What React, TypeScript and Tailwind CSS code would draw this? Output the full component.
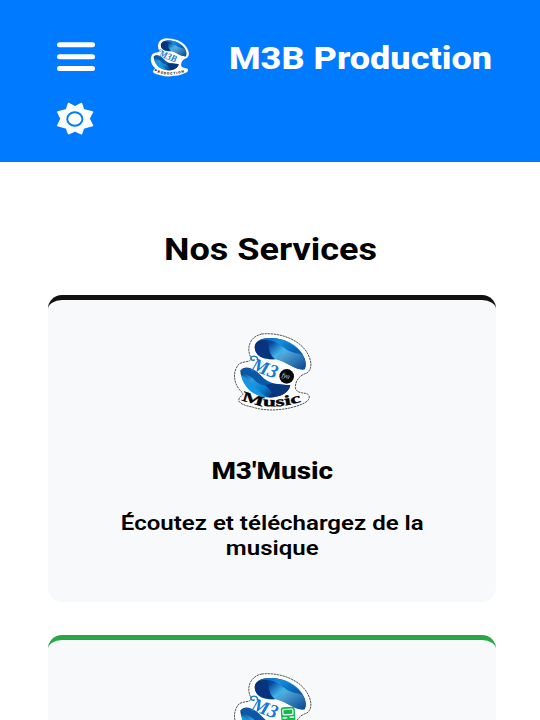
import React from "react";

type Variant = "production" | "music" | "message";

function Logo({ variant, className }: { variant: Variant; className: string }) {
  const id = "logo-" + variant;
  return (
    <svg viewBox="24 24 240 240" className={className}>
      <defs>
        <linearGradient id={id + "-a"} x1="0" y1="0" x2="1" y2="0.7">
          <stop offset="0" stopColor="#07164f" />
          <stop offset="0.3" stopColor="#08499f" />
          <stop offset="0.55" stopColor="#42b5e9" />
          <stop offset="1" stopColor="#062f83" />
        </linearGradient>
        <linearGradient id={id + "-b"} x1="0" y1="0" x2="1" y2="0.7">
          <stop offset="0" stopColor="#082765" />
          <stop offset="0.35" stopColor="#2d9ddd" />
          <stop offset="0.65" stopColor="#087dce" />
          <stop offset="1" stopColor="#061750" />
        </linearGradient>
        <linearGradient id={id + "-c"} x1="0" y1="0" x2="1" y2="0.4">
          <stop offset="0" stopColor="#0756ae" />
          <stop offset="0.5" stopColor="#138de0" />
          <stop offset="1" stopColor="#0860b4" />
        </linearGradient>
        <linearGradient id={id + "-d"} x1="0" y1="0" x2="1" y2="1">
          <stop offset="0" stopColor="#68c4ee" />
          <stop offset="1" stopColor="#084590" />
        </linearGradient>
        <path id={id + "-p"} d="M50 223Q130 262 232 229" />
      </defs>
      <path
        d="M110 27C155 22 215 38 243 78C260 104 264 130 246 144C226 150 211 164 211 188C213 201 224 203 241 205C257 208 257 223 240 233C200 254 130 262 85 247C58 241 38 235 42 222C45 212 58 210 52 203C26 180 20 142 42 117C56 107 76 114 79 100C66 79 66 38 110 27Z"
        fill="#fff"
        stroke="#333"
        strokeWidth={variant === "production" ? 1 : 2.5}
        strokeDasharray="7 2"
      />
      <path d="M89 66C90 34 150 33 190 50C232 70 251 110 239 133C211 137 181 107 151 103C118 105 90 96 89 66Z" fill={`url(#${id}-a)`} />
      <path d="M98 50C140 35 165 60 185 74C202 85 223 84 232 90C215 62 178 36 130 39C115 40 103 43 98 50Z" fill={`url(#${id}-c)`} />
      <path d="M89 66C94 52 110 46 122 47C138 55 123 80 151 103C115 104 90 92 89 66Z" fill="#08347f" />
      <path d="M185 74C204 86 224 84 233 91C243 107 244 122 239 133C209 137 184 108 155 104C172 97 164 81 185 74Z" fill={`url(#${id}-d)`} />
      <path d="M46 137C60 118 87 130 107 151C131 180 169 179 196 181C189 208 159 219 127 217C77 214 48 173 46 137Z" fill={`url(#${id}-b)`} />
      <path d="M46 137C60 121 87 130 107 151C123 170 140 177 153 178C119 187 99 179 84 160C72 149 56 147 46 137Z" fill="#0b59a6" />
      <path d="M120 181C143 171 168 179 196 181C189 208 159 219 127 217C149 210 137 193 120 181Z" fill="#08367f" />
      <path d="M49 150C78 165 95 200 127 217C85 215 55 185 49 150Z" fill="#1496e2" />
      <g fontFamily="'Liberation Serif', serif" fontStyle="italic" fontWeight="700" fill="#1678cf">
        <text x="76" y="134" fontSize="58" transform="rotate(20 76 134)" textLength={variant === "production" ? 108 : 80} lengthAdjust="spacingAndGlyphs">
          {variant === "production" ? "M3B" : "M3"}
        </text>
        <path d="M88 105C78 108 74 99 81 95C89 91 99 96 98 104" fill="none" stroke="#1678cf" strokeWidth="4" strokeLinecap="round" />
      </g>
      {variant === "music" && (
        <g>
          <circle cx="185" cy="154" r="22" fill="#090909" />
          <text x="170" y="159" fontFamily="'Liberation Serif', serif" fontStyle="italic" fontSize="20" fill="#ddd" transform="rotate(15 185 154)">fya</text>
        </g>
      )}
      {variant === "message" && (
        <g transform="rotate(-4 188 146)">
          <rect x="168" y="126" width="42" height="42" rx="7" fill="#12b94d" />
          <rect x="174" y="133" width="30" height="16" rx="3" fill="none" stroke="#fff" strokeWidth="3.5" />
          <path d="M172 158H186M193 157H206" stroke="#fff" strokeWidth="4.5" />
        </g>
      )}
      {variant === "production" && (
        <text fontFamily="Roboto, sans-serif" fontWeight="900" fontSize="21" fill="#222">
          <textPath href={`#${id}-p`} startOffset="0" textLength="184">PRODUCTION</textPath>
        </text>
      )}
      {variant === "music" && (
        <text fontFamily="'Liberation Serif', serif" fontWeight="700" fontSize="42" fill="#000" stroke="#000" strokeWidth="1">
          <textPath href={`#${id}-p`} textLength="184" lengthAdjust="spacingAndGlyphs">Music</textPath>
        </text>
      )}
    </svg>
  );
}

function MenuIcon() {
  return (
    <svg viewBox="0 0 38 30" className="h-[30px] w-[38px]" fill="#fff">
      <rect y="0.2" width="38" height="5" rx="2.5" />
      <rect y="12.2" width="38" height="5" rx="2.5" />
      <rect y="24" width="38" height="5" rx="2.5" />
    </svg>
  );
}

function SunIcon() {
  return (
    <svg viewBox="0 0 38 34" className="h-[34px] w-[38px]">
      <path
        d="M11.5 1.5L18 4.8L24.5 1.5L26.5 7.8L35.5 10L32 16.7L35.5 23.5L26.5 26L24.5 31.8L18 28.8L11.5 31.8L9.5 26L0.8 23.5L4 16.7L0.8 10L9.5 7.8Z"
        fill="#fff"
        stroke="#fff"
        strokeWidth="1.5"
        strokeLinejoin="round"
      />
      <ellipse cx="17.8" cy="17" rx="7.6" ry="6.8" fill="#fff" stroke="#007bff" strokeWidth="1.9" />
    </svg>
  );
}

export default function App() {
  return (
    <div className="h-[720px] w-[540px] overflow-hidden bg-white font-['Roboto',sans-serif] text-black">
      <header className="h-[162px] bg-[#007bff] pl-[57px] text-white">
        <div className="flex h-[88px] items-start pt-[39px]">
          <div className="pt-[3px]">
            <MenuIcon />
          </div>
          <Logo variant="production" className="-mt-px ml-[54.5px] size-10" />
          <h1 className="ml-[39px] origin-left scale-x-[1.127] text-[32px] leading-[38px] font-extrabold whitespace-nowrap">M3B Production</h1>
        </div>
        <div className="pt-[14px]">
          <SunIcon />
        </div>
      </header>
      <main className="pr-11 pl-12">
        <h2 className="pt-[68px] pr-[3px] text-center text-[32px] leading-[38px] font-bold">
          <span className="inline-block scale-x-[1.127]">Nos Services</span>
        </h2>
        <section className="mt-[27px] flex h-[307px] flex-col items-center rounded-[14px] border-t-[5px] border-[#111] bg-[#f8f9fa] pt-[33px] text-center">
          <Logo variant="music" className="ml-0.5 size-20" />
          <h3 className="mt-[44px] scale-x-[1.165] text-[24px] leading-7 font-extrabold">M3'Music</h3>
          <p className="mt-[26px] scale-x-[1.145] text-[21px] leading-[25px] font-semibold">
            Écoutez et téléchargez de la
            <br />
            musique
          </p>
        </section>
        <section className="mt-[33px] flex h-[307px] flex-col items-center rounded-[14px] border-t-[5px] border-[#28a745] bg-[#f8f9fa] pt-[33px]">
          <Logo variant="message" className="ml-0.5 size-20" />
        </section>
      </main>
    </div>
  );
}
